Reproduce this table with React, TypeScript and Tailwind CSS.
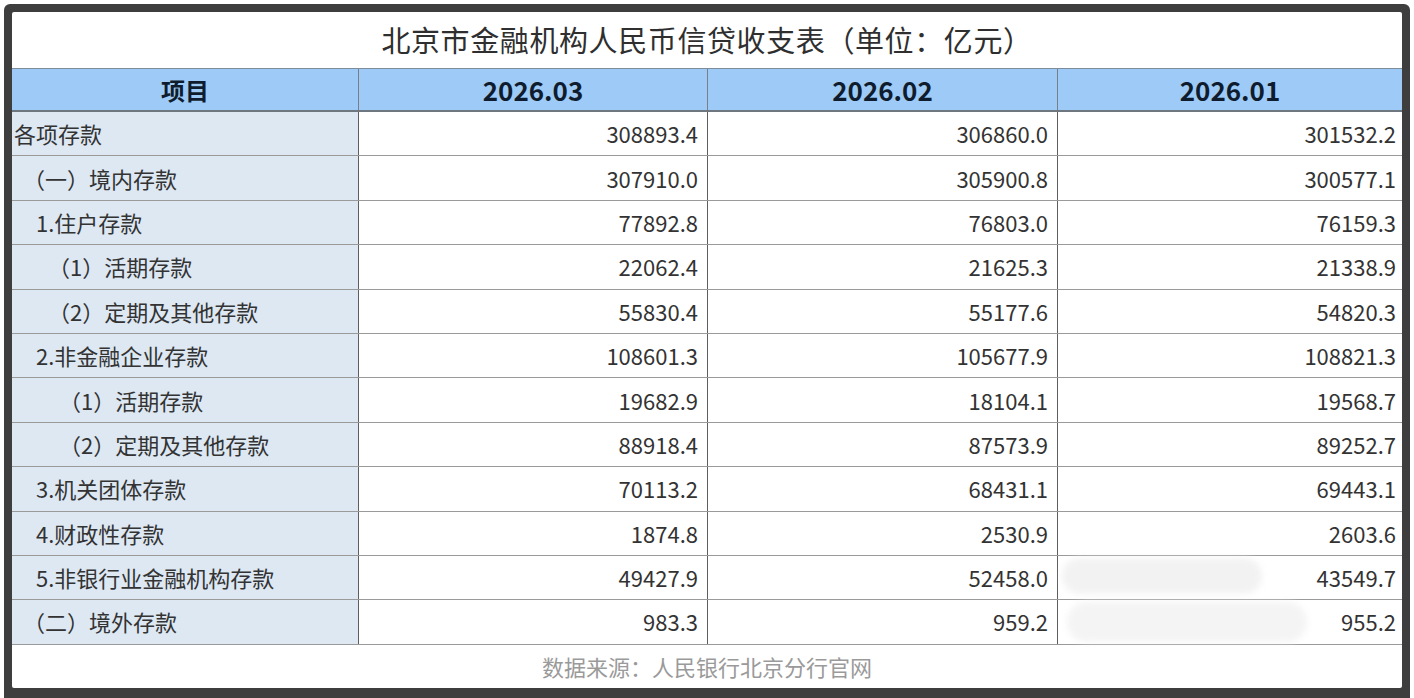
const rows: { label: string; indent: string; values: string[] }[] = [
  { label: "各项存款", indent: "pl-[2px]", values: ["308893.4", "306860.0", "301532.2"] },
  { label: "（一）境内存款", indent: "pl-[11px]", values: ["307910.0", "305900.8", "300577.1"] },
  { label: "1.住户存款", indent: "pl-[24px]", values: ["77892.8", "76803.0", "76159.3"] },
  { label: "（1）活期存款", indent: "pl-[36px]", values: ["22062.4", "21625.3", "21338.9"] },
  { label: "（2）定期及其他存款", indent: "pl-[36px]", values: ["55830.4", "55177.6", "54820.3"] },
  { label: "2.非金融企业存款", indent: "pl-[24px]", values: ["108601.3", "105677.9", "108821.3"] },
  { label: "（1）活期存款", indent: "pl-[47px]", values: ["19682.9", "18104.1", "19568.7"] },
  { label: "（2）定期及其他存款", indent: "pl-[47px]", values: ["88918.4", "87573.9", "89252.7"] },
  { label: "3.机关团体存款", indent: "pl-[24px]", values: ["70113.2", "68431.1", "69443.1"] },
  { label: "4.财政性存款", indent: "pl-[24px]", values: ["1874.8", "2530.9", "2603.6"] },
  { label: "5.非银行业金融机构存款", indent: "pl-[24px]", values: ["49427.9", "52458.0", "43549.7"] },
  { label: "（二）境外存款", indent: "pl-[11px]", values: ["983.3", "959.2", "955.2"] },
];

const periods = ["2026.03", "2026.02", "2026.01"];

export default function App() {
  return (
    <div
      className="w-[1414px] h-[698px] overflow-hidden bg-white pl-[4px] pt-[4px]"
      style={{ fontFamily: '"Noto Sans CJK SC", "Noto Sans", sans-serif' }}
    >
      <div className="w-[1406px] h-[702px] rounded-[6px] bg-[#3e3e3e] px-[8px] pt-[8px]">
        <div className="relative w-[1390px] h-[676px] bg-white rounded-[2px] flex flex-col">
          {/* Title */}
          <div className="h-[56px] flex items-center justify-center text-[29px] text-[#2f2f2f] tracking-[0.6px]">
            北京市金融机构人民币信贷收支表（单位：亿元）
          </div>

          {/* Header */}
          <div className="grid grid-cols-[347px_349px_350px_1fr] h-[44px] bg-[#9dcaf6] border-t border-[#7f8c99] border-b-2 border-b-[#6e7680] text-[26px] font-bold text-[#0f1c2e]">
            <div className="flex items-center justify-center border-r border-[#7a7f86] text-[24px]">项目</div>
            {periods.map((p, i) => (
              <div
                key={p}
                className={`flex items-center justify-center ${i < 2 ? "border-r border-[#7a7f86]" : ""}`}
              >
                {p}
              </div>
            ))}
          </div>

          {/* Body */}
          {rows.map((r, idx) => (
            <div
              key={idx}
              className="grid grid-cols-[347px_349px_350px_1fr] h-[44.4px] border-b border-[#9a9a9a] text-[22px] text-[#333333]"
            >
              <div className={`flex items-center bg-[#dde8f3] border-r border-[#5e5e5e] ${r.indent}`}>
                {r.label}
              </div>
              {r.values.map((v, i) => (
                <div
                  key={i}
                  className={`flex items-center justify-end ${i < 2 ? "pr-[9px] border-r border-[#5e5e5e]" : "pr-[6px]"}`}
                >
                  {v}
                </div>
              ))}
            </div>
          ))}

          {/* Footer */}
          <div className="flex-1 flex items-center justify-center text-[22px] text-[#9a9a9a]">
            数据来源：人民银行北京分行官网
          </div>

          {/* blurred watermark */}
          <div className="absolute left-[1050px] top-[546px] w-[200px] h-[36px] rounded-full bg-[#f1f1f1] blur-[3px] opacity-90" />
          <div className="absolute left-[1055px] top-[590px] w-[240px] h-[40px] rounded-full bg-[#f3f3f3] blur-[3px] opacity-90" />
        </div>
      </div>
    </div>
  );
}
